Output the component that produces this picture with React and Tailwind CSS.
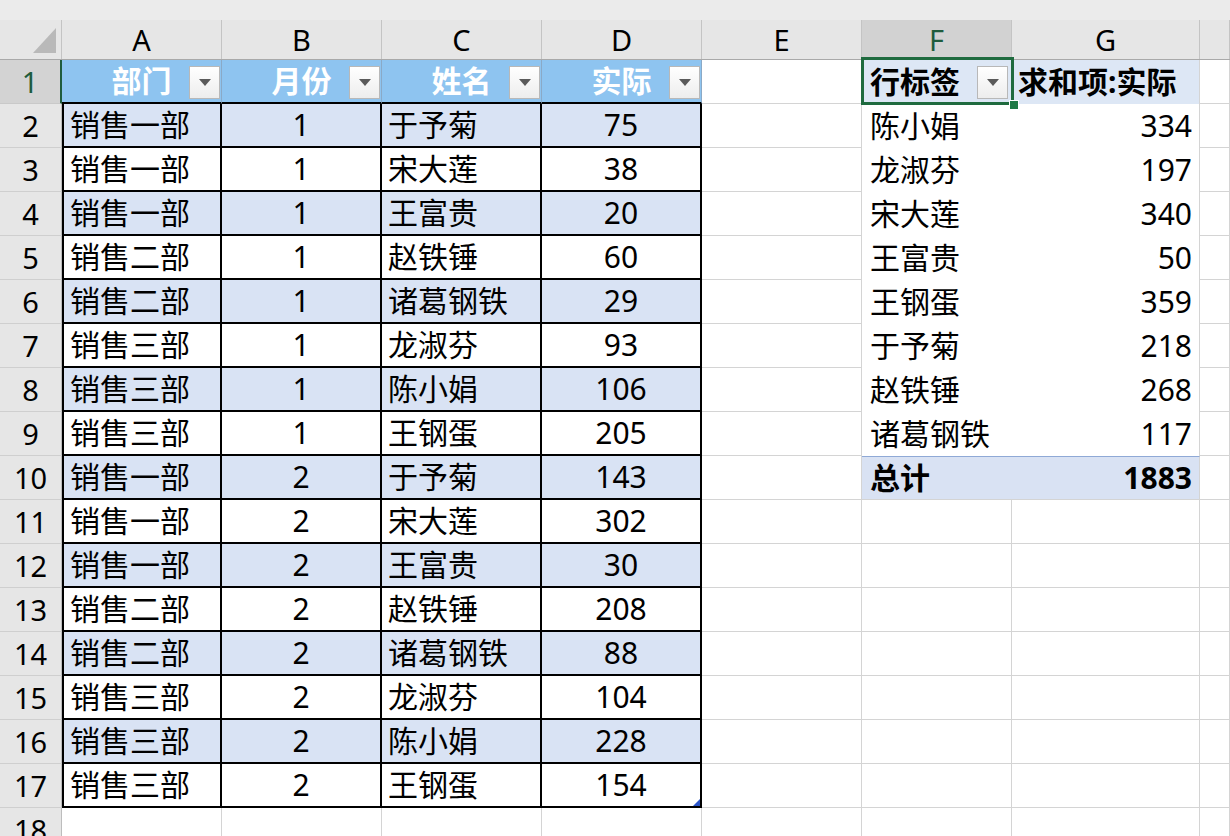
import React from 'react'

const FONT = { fontFamily: '"Noto Sans", "Noto Sans CJK SC", sans-serif' }

const COLS = 'grid grid-cols-[62px_160px_160px_160px_160px_160px_150px_188px_1fr]'

const DATA = [
  ['销售一部', 1, '于予菊', 75],
  ['销售一部', 1, '宋大莲', 38],
  ['销售一部', 1, '王富贵', 20],
  ['销售二部', 1, '赵铁锤', 60],
  ['销售二部', 1, '诸葛钢铁', 29],
  ['销售三部', 1, '龙淑芬', 93],
  ['销售三部', 1, '陈小娟', 106],
  ['销售三部', 1, '王钢蛋', 205],
  ['销售一部', 2, '于予菊', 143],
  ['销售一部', 2, '宋大莲', 302],
  ['销售一部', 2, '王富贵', 30],
  ['销售二部', 2, '赵铁锤', 208],
  ['销售二部', 2, '诸葛钢铁', 88],
  ['销售三部', 2, '龙淑芬', 104],
  ['销售三部', 2, '陈小娟', 228],
  ['销售三部', 2, '王钢蛋', 154],
]

const PIVOT = [
  ['陈小娟', 334],
  ['龙淑芬', 197],
  ['宋大莲', 340],
  ['王富贵', 50],
  ['王钢蛋', 359],
  ['于予菊', 218],
  ['赵铁锤', 268],
  ['诸葛钢铁', 117],
]

function Drop({ className }) {
  return (
    <div
      className={`absolute top-[6px] w-[31px] h-[33px] border border-[#b8b8b8] bg-linear-to-b from-white to-[#ededed] flex items-center justify-center ${className}`}
    >
      <svg width="12" height="7" viewBox="0 0 12 7">
        <path d="M0 0h12L6 7z" fill="#5a5a5a" />
      </svg>
    </div>
  )
}

function ColHeader() {
  const letters = ['A', 'B', 'C', 'D', 'E', 'F', 'G', '']
  return (
    <div className={`${COLS} grid-rows-[39px] h-[40px] bg-[#e6e6e6] border-b border-[#a9a9a9]`}>
      <div className="relative border-r border-[#c4c4c4]">
        <svg className="absolute left-[33px] top-[8px]" width="23" height="25" viewBox="0 0 23 25">
          <path d="M23 0V25H0z" fill="#b9b9b9" />
        </svg>
      </div>
      {letters.map((l, i) =>
        l === 'F' ? (
          <div key={i} className="flex items-center justify-center bg-[#d2d2d2] border-r border-[#c4c4c4] text-[29px] text-[#1f5c3d]">
            {l}
          </div>
        ) : (
          <div key={i} className="flex items-center justify-center border-r border-[#c4c4c4] text-[29px] text-black">
            {l}
          </div>
        ),
      )}
    </div>
  )
}

function RowHead({ n }) {
  if (n === 1)
    return (
      <div className="flex items-center justify-center bg-[#d3d3d3] border-b border-[#c9c9c9] border-r-2 border-r-[#1f5c3d] text-[29px] text-[#1f5c3d]">
        {n}
      </div>
    )
  return (
    <div className="flex items-center justify-center bg-[#e6e6e6] border-b border-[#cfcfcf] border-r border-r-[#bdbdbd] text-[29px] text-black">
      {n}
    </div>
  )
}

function Grid() {
  return <div className="border-r border-b border-[#d4d4d4]" />
}

function HeaderRow() {
  return (
    <div className={`${COLS} grid-rows-[44px] h-[44px]`}>
      <RowHead n={1} />
      <div className="relative flex items-center justify-center bg-[#8ec4f0] border-r border-[#8aa9c6] border-b-2 border-b-black font-bold text-white text-[30px]">
        部门
        <Drop className="right-[1px]" />
      </div>
      <div className="relative flex items-center justify-center bg-[#8ec4f0] border-r border-[#8aa9c6] border-b-2 border-b-black font-bold text-white text-[30px]">
        月份
        <Drop className="right-[1px]" />
      </div>
      <div className="relative flex items-center justify-center bg-[#8ec4f0] border-r border-[#8aa9c6] border-b-2 border-b-black font-bold text-white text-[30px]">
        姓名
        <Drop className="right-[1px]" />
      </div>
      <div className="relative flex items-center justify-center bg-[#8ec4f0] border-r border-[#8aa9c6] border-b-2 border-b-black font-bold text-white text-[30px]">
        实际
        <Drop className="right-[1px]" />
      </div>
      <Grid />
      <div className="relative flex items-center pl-[8px] bg-[#dde7f5] font-bold text-[30px] text-black">
        行标签
        <Drop className="right-[4px]" />
        <div className="absolute -left-[1px] -top-[3px] -right-[2px] -bottom-[1px] border-[3px] border-[#1f6b3f] pointer-events-none" />
        <div className="absolute -right-[7px] -bottom-[6px] w-[10px] h-[10px] bg-[#1f7a45] border border-white" />
      </div>
      <div className="flex items-center pl-[6px] bg-[#dde7f5] border-r border-[#d4d4d4] font-bold text-[30px] text-black">
        求和项:实际
      </div>
      <Grid />
    </div>
  )
}

function DataRow({ n, row }) {
  const band = n % 2 === 0
  const bg = band ? 'bg-[#d9e3f4]' : 'bg-white'
  const p = PIVOT[n - 2]
  const total = n === 10
  return (
    <div className={`${COLS} grid-rows-[44px] h-[44px] text-[30px] text-black`}>
      <RowHead n={n} />
      <div className={`flex items-center pl-[6px] border-l-2 border-r-2 border-b-2 border-black ${bg}`}>{row[0]}</div>
      <div className={`flex items-center justify-center border-r-2 border-b-2 border-black ${bg}`}>{row[1]}</div>
      <div className={`flex items-center pl-[6px] border-r-2 border-b-2 border-black ${bg}`}>{row[2]}</div>
      <div className={`relative flex items-center justify-center border-r-2 border-b-2 border-black ${bg}`}>
        {row[3]}
        {n === 17 && (
          <svg className="absolute right-0 bottom-0" width="7" height="7" viewBox="0 0 7 7">
            <path d="M7 0V7H0z" fill="#2b55c8" />
          </svg>
        )}
      </div>
      <Grid />
      {p ? (
        <div className="flex items-center pl-[8px] bg-white">{p[0]}</div>
      ) : total ? (
        <div className="flex items-center pl-[8px] bg-[#d9e2f3] border-t border-t-[#8fa9d6] border-b border-b-[#d4d4d4] font-bold">总计</div>
      ) : (
        <Grid />
      )}
      {p ? (
        <div className="flex items-center justify-end pr-[7px] bg-white border-r border-[#d4d4d4]">{p[1]}</div>
      ) : total ? (
        <div className="flex items-center justify-end pr-[7px] bg-[#d9e2f3] border-t border-t-[#8fa9d6] border-r border-r-[#d4d4d4] border-b border-b-[#d4d4d4] font-bold">1883</div>
      ) : (
        <Grid />
      )}
      <Grid />
    </div>
  )
}

function EmptyRow({ n }) {
  return (
    <div className={`${COLS} grid-rows-[44px] h-[44px]`}>
      <RowHead n={n} />
      <Grid />
      <Grid />
      <Grid />
      <Grid />
      <Grid />
      <Grid />
      <Grid />
      <Grid />
    </div>
  )
}

export default function App() {
  return (
    <div className="w-[1230px] h-[836px] overflow-hidden bg-white leading-[30px]" style={FONT}>
      <div className="h-[20px] bg-[#ebebeb]" />
      <ColHeader />
      <HeaderRow />
      {DATA.map((row, i) => (
        <DataRow key={i} n={i + 2} row={row} />
      ))}
      <EmptyRow n={18} />
    </div>
  )
}
